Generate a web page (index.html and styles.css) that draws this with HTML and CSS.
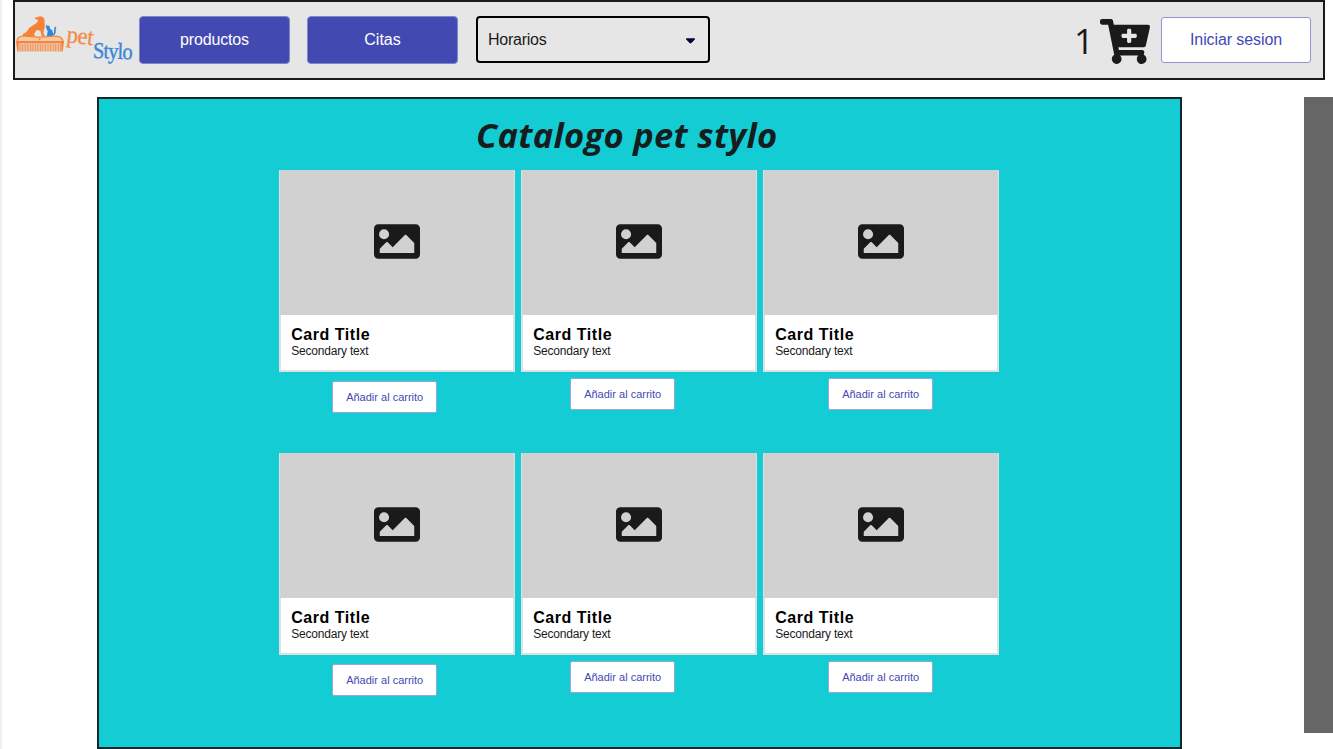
FILE: index.html
```html
<!DOCTYPE html>
<html lang="es">
<head>
<meta charset="utf-8">
<title>Pet Stylo</title>
<link rel="stylesheet" href="styles.css">
</head>
<body>
<svg class="defs" aria-hidden="true">
  <symbol id="picture" viewBox="0 0 512 384">
    <path fill-rule="evenodd" d="M464 0H48C21 0 0 21 0 48v288c0 27 21 48 48 48h416c27 0 48-21 48-48V48c0-27-21-48-48-48zM112 56a56 56 0 1 1 0 112 56 56 0 0 1 0-112zM64 320v-48l72-72c5-5 12-5 17 0l55 56 135-136c5-5 12-5 17 0l88 88v112z"/>
  </symbol>
</svg>
<header class="topbar">
  <div class="logo">
    <svg class="logo-art" viewBox="0 0 50 38">
      <path class="orange" d="M8 21c-.6-1-.2-2.300 1-2.700 2-.5 3-1.400 3.900-3.500 1.300-3 4.800-4 7.300-5.800 2.200-1.500 2.600-2.500 2.800-4.300l-2.300-.4c-1-.4-.9-1.500 0-1.800l2.700-.7c1-1 3.200-.8 4.200.3 1.700.9 1.900 2.300 2 4.100.1 3 .8 6.300-.9 9.300l-.2 3.700 1.700 1.300v.8h-3.700l-1-5.500-4-.8-2.700 4.500 1.500 1v.8z"/>
      <path class="blue" d="M31 9.500l1.800 1.400 1.600-.3.500 2.800c2.100 1.200 3.300 3.200 3.200 5.500 1.800-1 .6-3.600 1.200-5.900.5-1.600 1.800-1.700 2.200-.6-1.100.4-.7 1.800-.7 3.600 0 3-1.500 4.900-4 4.900h-5l.9-4.700-1.500-3.300z"/>
      <path class="comb" d="M2 27c0-4 2-5.700 6-5.800 6-.2 11 1 16.700 1s10-1.200 16-1c4 .1 7 2 7.600 5.800z"/>
      <circle class="orange" cx="24.700" cy="24.300" r="1"/>
      <path class="orange" d="M1 26.200h48l-1.300 10.300h-1l-.7-8.300H4l-.7 8.300h-1z"/>
      <path class="teeth" d="M3.500 32.500h43.500"/>
    </svg>
    <span class="word-pet">pet</span>
    <span class="word-stylo">Stylo</span>
  </div>
  <nav class="menu">
    <a class="menu-button productos">productos</a>
    <a class="menu-button">Citas</a>
    <div class="select"><span>Horarios</span>
      <svg class="caret" viewBox="0 0 10 6"><path d="M.7 0h8.600c.6 0 .9.7.5 1.200L6 5.300c-.6.600-1.400.6-2 0L.2 1.200C-.2.700.1 0 .7 0z"/></svg>
    </div>
  </nav>
  <div class="account">
    <span class="count">1</span>
    <svg class="cart" viewBox="0 0 576 512" preserveAspectRatio="none"><path fill-rule="evenodd" d="M504.700 320H211.600l6.500 32h268.500c15.400 0 26.800 14.300 23.400 29.300l-5.500 24.300C523.200 414.600 536 433.800 536 456c0 31.200-25.500 56.400-56.800 56-29.800-.4-54.400-24.600-55.200-54.400-.4-16.300 6.100-31 16.800-41.500H231.200C241.500 426.200 248 440.300 248 456c0 31.800-26.500 57.400-58.700 55.900-28.500-1.300-51.700-24.500-53.200-53-1.200-22.100 10.400-41.500 28.100-51.600L93.900 64H24C10.700 64 0 53.300 0 40V24C0 10.700 10.700 0 24 0h102.500c11.400 0 21.200 8 23.500 19.200L159.200 64H552c15.400 0 26.800 14.300 23.400 29.300l-47.300 208c-2.500 10.900-12.200 18.700-23.400 18.700zM408 168h-48v-40c0-8.800-7.200-16-16-16h-16c-8.800 0-16 7.200-16 16v40h-48c-8.800 0-16 7.200-16 16v16c0 8.800 7.200 16 16 16h48v40c0 8.800 7.200 16 16 16h16c8.800 0 16-7.200 16-16v-40h48c8.800 0 16-7.200 16-16v-16c0-8.800-7.200-16-16-16z"/></svg>
    <a class="login">Iniciar sesion</a>
  </div>
</header>
<div class="content">
  <main class="catalog">
    <h1>Catalogo pet stylo</h1>
    <div class="grid">
      <article class="product first"><div class="card"><div class="photo"><svg><use href="#picture"/></svg></div><div class="info"><h2>Card Title</h2><p>Secondary text</p></div></div><a class="add">Añadir al carrito</a></article>
      <article class="product second"><div class="card"><div class="photo"><svg><use href="#picture"/></svg></div><div class="info"><h2>Card Title</h2><p>Secondary text</p></div></div><a class="add">Añadir al carrito</a></article>
      <article class="product third"><div class="card"><div class="photo"><svg><use href="#picture"/></svg></div><div class="info"><h2>Card Title</h2><p>Secondary text</p></div></div><a class="add">Añadir al carrito</a></article>
      <article class="product first"><div class="card"><div class="photo"><svg><use href="#picture"/></svg></div><div class="info"><h2>Card Title</h2><p>Secondary text</p></div></div><a class="add">Añadir al carrito</a></article>
      <article class="product second"><div class="card"><div class="photo"><svg><use href="#picture"/></svg></div><div class="info"><h2>Card Title</h2><p>Secondary text</p></div></div><a class="add">Añadir al carrito</a></article>
      <article class="product third"><div class="card"><div class="photo"><svg><use href="#picture"/></svg></div><div class="info"><h2>Card Title</h2><p>Secondary text</p></div></div><a class="add">Añadir al carrito</a></article>
    </div>
  </main>
  <aside class="scroll-strip"></aside>
</div>
</body>
</html>
```
FILE: styles.css
```css
* { box-sizing: border-box; }
body {
  margin: 0;
  height: 749px;
  overflow: hidden;
  padding-left: 11px;
  border-left: 2px solid #f0f0f0;
  background: #fff;
  font-family: "Liberation Sans", Arial, sans-serif;
}
h1, h2, p { margin: 0; }
.defs { display: none; }

.topbar {
  display: flex;
  align-items: flex-start;
  width: 1312px;
  height: 80px;
  border: 2px solid #1a1a1a;
  background: #e6e6e6;
}
.logo { position: relative; width: 124px; height: 76px; }
.logo-art { display: block; width: 50px; height: 38px; margin-top: 13px; }
.orange { fill: #f58238; }
.blue { fill: #2f86dc; }
.comb { fill: #f8c9a5; stroke: #f58238; stroke-width: 1.3; }
.teeth { fill: none; stroke: #f39a61; stroke-width: 8; stroke-dasharray: 1.2 .45; }
.word-pet, .word-stylo {
  position: absolute;
  font-family: "Liberation Serif", serif;
  line-height: 1;
}
.word-pet { left: 52px; top: 20px; font-size: 24px; letter-spacing: -.5px; color: #f58a48; -webkit-text-stroke: .3px #f58a48; transform: rotate(7deg) scaleX(.95); transform-origin: left center; }
.word-stylo { left: 78px; top: 37px; font-size: 23px; letter-spacing: -1px; color: #3b88d8; -webkit-text-stroke: .4px #3b88d8; transform: rotate(2deg) scaleX(.89); transform-origin: left center; }

.menu { display: flex; gap: 17px; padding-top: 14px; }
.menu-button {
  width: 151px;
  height: 48px;
  border: 1px solid #7f86cc;
  border-radius: 4px;
  background: #424ab2;
  color: #fff;
  font-size: 16px;
  line-height: 46px;
  text-align: center;
}
.productos { letter-spacing: -.15px; }
.select {
  display: flex;
  align-items: center;
  justify-content: space-between;
  width: 234px;
  height: 47px;
  margin-left: 1px;
  padding: 1px 13px 0 10px;
  border: 2px solid #000;
  border-radius: 4px;
  color: #1a1a1a;
  font-size: 16px;
  letter-spacing: -.25px;
}
.caret { width: 9px; height: 6px; margin-top: 2px; fill: #050038; }

.account { display: flex; align-items: flex-start; margin-left: auto; padding-right: 12px; }
.count { width: 26px; margin-top: 15px; font: 400 35px/48px "Open Sans", sans-serif; color: #1a1a1a; }
.cart { width: 50px; height: 45px; margin: 17px 11px 0 0; fill: #1a1a1a; }
.login {
  width: 150px;
  height: 46px;
  margin-top: 15px;
  border: 1px solid #8f96d0;
  border-radius: 3px;
  background: #fff;
  color: #424ab2;
  font-size: 16px;
  line-height: 44px;
  letter-spacing: -.1px;
  text-align: center;
}

.content { display: flex; justify-content: space-between; padding-left: 83.500px; margin-top: 17px; }
.catalog { width: 1085.500px; height: 652px; border: 2px solid #10282b; background: #14cdd4; }
.catalog h1 {
  padding-left: 377.500px;
  padding-top: 12px;
  height: 71px;
  font: italic 700 34.500px/48px "Open Sans", sans-serif;
  letter-spacing: .3px;
  color: #151d1e;
  white-space: nowrap;
}
.grid {
  display: grid;
  grid-template-columns: repeat(3, 236px);
  grid-auto-rows: 283px;
  column-gap: 6px;
  padding-left: 180.700px;
}
.product { display: flex; flex-direction: column; }
.card { height: 202px; border: 2px solid #e0e0e0; border-top-color: #d1d1d1; background: #fff; }
.photo { display: flex; justify-content: center; height: 143px; margin: 0 -1px; background: #d1d1d1; }
.photo svg { width: 46px; height: 35px; margin-top: 52px; fill: #1a1a1a; }
.info { padding: 10px; }
.info h2 { font-size: 16px; line-height: 19px; letter-spacing: .55px; color: #000; }
.info p { font-size: 12px; line-height: 14px; letter-spacing: -.2px; color: #1a1a1a; }
.add {
  width: 105px;
  height: 32px;
  border: 1px solid #9aa6da;
  border-radius: 2px;
  background: #fff;
  color: #424ab2;
  font-size: 11px;
  line-height: 31px;
  letter-spacing: 0;
  text-align: center;
}
.first .add { margin: 9px 0 0 53px; }
.second .add { margin: 6px 0 0 49px; }
.third .add { margin: 6px 0 0 65px; }
.scroll-strip { width: 29px; height: 636px; background: #666; }
```
